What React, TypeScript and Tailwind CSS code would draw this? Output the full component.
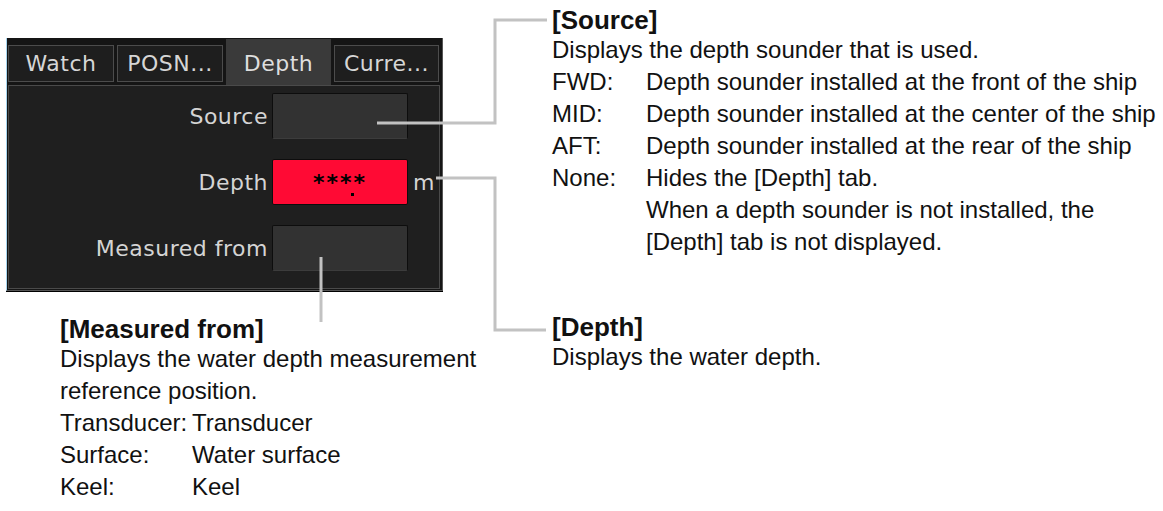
import React from 'react';

// Depth tab of the sensor panel, with the manual's callout notes around it

const sourceRows: [string, string][] = [
  ['FWD:', 'Depth sounder installed at the front of the ship'],
  ['MID:', 'Depth sounder installed at the center of the ship'],
  ['AFT:', 'Depth sounder installed at the rear of the ship'],
  ['None:', 'Hides the [Depth] tab.'],
  ['', 'When a depth sounder is not installed, the'],
  ['', '[Depth] tab is not displayed.'],
];

const measuredRows: [string, string][] = [
  ['Transducer:', 'Transducer'],
  ['Surface:', 'Water surface'],
  ['Keel:', 'Keel'],
];

const tabs = [
  { label: 'Watch', w: 'w-[106px]' },
  { label: 'POSN...', w: 'w-[106px]' },
  { label: 'Depth', w: 'w-[105px]', active: true },
  { label: 'Curre...', w: 'w-[105px]' },
];

function Tab({ label, w, active }: { label: string; w: string; active?: boolean }) {
  if (active) {
    return (
      <div className={`${w} h-[46px] bg-[#3a3a3a] flex items-center justify-center pt-[2px] text-[#dedede]`}>
        {label}
      </div>
    );
  }
  return (
    <div className={`${w} h-[37px] mt-[6px] bg-[#1e1e1e] border border-[#4c4c4c] flex items-center justify-center text-[#d6d6d6]`}>
      {label}
    </div>
  );
}

function Field({ label, red, unit }: { label: string; red?: boolean; unit?: string }) {
  return (
    <div className="flex items-center h-[46px]">
      <div className="flex-1 text-right pr-[4px] text-[#d4d4d4]">{label}</div>
      {red ? (
        <div className="w-[136px] h-[46px] rounded-[2px] border border-[#0d0d0d] bg-[#ff0a34] flex items-center justify-center">
          <span className="relative text-black font-bold leading-none tracking-[2px] pt-[2px]">
            ****
            <span className="absolute left-[38px] bottom-[-2px] w-[3px] h-[3px] bg-black" />
          </span>
        </div>
      ) : (
        <div className="w-[136px] h-[46px] rounded-[2px] border border-[#0d0d0d] border-b-[#3c3c3c] bg-[#323232]" />
      )}
      <div className="w-[31px] pl-[5px] text-[#d4d4d4]">{unit}</div>
    </div>
  );
}

function DepthPanel() {
  return (
    <div className="ml-[6px] mt-[38px] w-[437px] h-[253px] bg-[#151515] border-l border-l-[#a8d6f0] border-r border-b border-r-[#555555] border-b-[#555555] shadow-[0_1px_0_#000] pt-[1px] pl-[1px] pr-[2px] pb-[1px] flex flex-col font-['DejaVu_Sans',sans-serif] text-[22px] tracking-[0.5px]">
      <div className="flex gap-[3px] h-[46px] items-start">
        {tabs.map((t) => (
          <Tab key={t.label} {...t} />
        ))}
      </div>
      <div className="w-[432px] h-[204px] border border-[#4a4a4a] bg-[#1f1f1f] pt-[7px] flex flex-col gap-[20px]">
        <Field label="Source" />
        <Field label="Depth" red unit="m" />
        <Field label="Measured from" />
      </div>
    </div>
  );
}

function Note({ title, children }: { title: string; children: React.ReactNode }) {
  return (
    <div className="text-[#111] text-[24px] leading-[32px] whitespace-nowrap">
      <div className="font-bold text-[26px] leading-[28px]">{title}</div>
      {children}
    </div>
  );
}

function Pairs({ rows, col }: { rows: [string, string][]; col: string }) {
  return (
    <div className={`grid ${col}`}>
      {rows.map(([k, v], i) => (
        <React.Fragment key={i}>
          <div>{k}</div>
          <div>{v}</div>
        </React.Fragment>
      ))}
    </div>
  );
}

function Connectors() {
  return (
    <svg className="absolute inset-0 pointer-events-none" width="1163" height="511">
      <g fill="none" stroke="#c2c2c2" strokeWidth="3">
        <polyline points="377,123 495,123 495,20 547,20" />
        <polyline points="436,178 495,178 495,330 546,330" />
        <line x1="321" y1="257" x2="321" y2="322" />
      </g>
    </svg>
  );
}

export default function App() {
  return (
    <div className="relative w-[1163px] h-[511px] overflow-hidden bg-white flex font-['Liberation_Sans',Arial,sans-serif]">
      <div className="w-[500px] shrink-0 flex flex-col">
        <DepthPanel />
        <div className="ml-[60px] mt-[24px]">
          <Note title="[Measured from]">
            <div>Displays the water depth measurement</div>
            <div>reference position.</div>
            <Pairs rows={measuredRows} col="grid-cols-[132px_1fr]" />
          </Note>
        </div>
      </div>
      <div className="pl-[52px] pt-[6px] flex flex-col">
        <Note title="[Source]">
          <div>Displays the depth sounder that is used.</div>
          <Pairs rows={sourceRows} col="grid-cols-[94px_1fr]" />
        </Note>
        <div className="mt-[55px]">
          <Note title="[Depth]">
            <div>Displays the water depth.</div>
          </Note>
        </div>
      </div>
      <Connectors />
    </div>
  );
}
